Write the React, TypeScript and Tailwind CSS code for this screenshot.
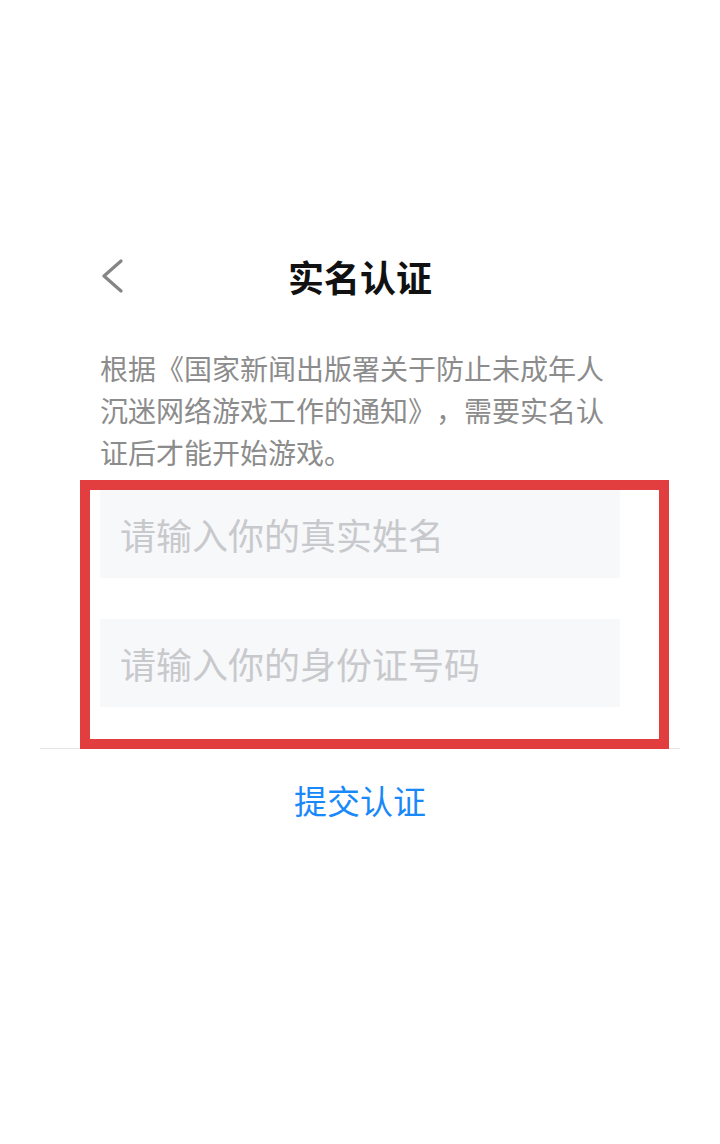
import { useState } from 'react';

const cjk = "font-['Noto_Sans_CJK_SC','Noto_Sans',sans-serif]";

const App = () => {
  const [name, setName] = useState('');
  const [idNo, setIdNo] = useState('');

  return (
    <div className={`relative w-[720px] h-[1144px] bg-white ${cjk} [text-spacing-trim:space-all]`}>
      <div className="mx-[40px] pt-[246px]">
        {/* Header */}
        <div className="relative h-[60px] flex items-center justify-center">
          <button className="absolute left-[60px] top-[13px] w-[24px] h-[34px] flex items-center justify-center">
            <svg width="24" height="34" viewBox="0 0 24 34" fill="none">
              <path d="M21 2L4 17L21 32" stroke="#858585" strokeWidth="3.2" strokeLinecap="round" strokeLinejoin="round" />
            </svg>
          </button>
          <h1 className="text-[36px] leading-[60px] font-bold text-[#111]">实名认证</h1>
        </div>

        {/* Notice */}
        <p className="mt-[41px] px-[60px] text-[28px] leading-[42px] text-[#8c8c8c]">
          根据《国家新闻出版署关于防止未成年人沉迷网络游戏工作的通知》，需要实名认证后才能开始游戏。
        </p>

        {/* Form */}
        <div className="mt-[17px] px-[60px] pb-[41px] flex flex-col gap-[41px]">
          <input
            value={name}
            onChange={(e) => setName(e.target.value)}
            placeholder="请输入你的真实姓名"
            className="h-[88px] w-full bg-[#f7f8fa] pl-[20px] text-[36px] text-[#333] placeholder:text-[#c8c9cc] outline-none"
          />
          <input
            value={idNo}
            onChange={(e) => setIdNo(e.target.value)}
            placeholder="请输入你的身份证号码"
            className="h-[88px] w-full bg-[#f7f8fa] pl-[20px] text-[36px] text-[#333] placeholder:text-[#c8c9cc] outline-none"
          />
        </div>

        {/* Submit */}
        <div className="border-t border-[#e5e5e5]">
          <button className="w-full h-[104px] text-[33px] text-[#1989fa]">提交认证</button>
        </div>
      </div>

      {/* highlight frame */}
      <div className="absolute left-[80px] top-[480px] w-[589px] h-[269px] border-[10px] border-[#e33e3f] pointer-events-none" />
    </div>
  );
};

export default App;
